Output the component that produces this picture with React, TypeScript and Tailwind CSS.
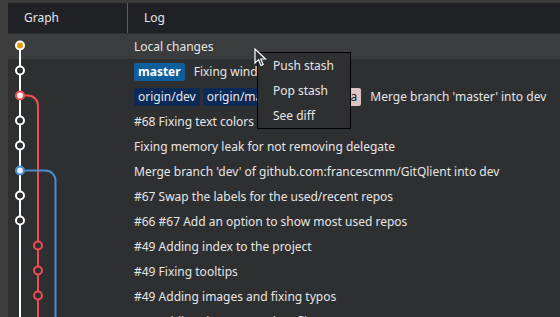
import React from "react";

const font = { fontFamily: '"Noto Sans", "Open Sans", sans-serif' };

type Badge = { text: string; cls: string };
type Row = { text: string; badges?: Badge[]; hl?: boolean };

const rows: Row[] = [
  { text: "Local changes", hl: true },
  {
    text: "Fixing windows titles",
    badges: [{ text: "master", cls: "bg-[#0e5e9e] text-white font-bold" }],
  },
  {
    text: "Merge branch 'master' into dev",
    badges: [
      { text: "origin/dev", cls: "bg-[#0b2a58] text-[#e8e8e8]" },
      { text: "origin/master", cls: "bg-[#0b2a58] text-[#e8e8e8]" },
      { text: "v1.0.0-beta", cls: "bg-[#dcc4c4] text-[#1b1b1b]" },
    ],
  },
  { text: "#68 Fixing text colors" },
  { text: "Fixing memory leak for not removing delegate" },
  { text: "Merge branch 'dev' of github.com:francescmm/GitQlient into dev" },
  { text: "#67 Swap the labels for the used/recent repos" },
  { text: "#66 #67 Add an option to show most used repos" },
  { text: "#49 Adding index to the project" },
  { text: "#49 Fixing tooltips" },
  { text: "#49 Adding images and fixing typos" },
  { text: "#49 Adding the new readme file" },
];

function Graph() {
  const white = "#ffffff";
  const red = "#f04e50";
  const blue = "#4a8ccc";
  const bg = "#2e2f31";
  const y = (i: number) => 12.5 + i * 25;
  return (
    <svg
      className="absolute left-0 top-0"
      width="120"
      height="300"
      viewBox="0 0 120 300"
    >
      <line x1="12" y1={y(0)} x2="12" y2="300" stroke={white} strokeWidth="2" />
      <path
        d={`M12 ${y(2)} H20 A10 10 0 0 1 30 ${y(2) + 10} V300`}
        fill="none"
        stroke={red}
        strokeWidth="2"
      />
      <path
        d={`M12 ${y(5)} H37.5 A10 10 0 0 1 47.5 ${y(5) + 10} V300`}
        fill="none"
        stroke={blue}
        strokeWidth="2"
      />
      <circle cx="12" cy={y(0)} r="4" fill="#e39a00" stroke={white} strokeWidth="2" />
      {[1, 3, 4, 6, 7].map((i) => (
        <circle key={i} cx="12" cy={y(i)} r="4" fill={bg} stroke={white} strokeWidth="2" />
      ))}
      <circle cx="12" cy={y(2)} r="4" fill="#ffffff" stroke={red} strokeWidth="2.2" />
      <circle cx="12" cy={y(5)} r="4" fill="#e6f0ff" stroke={blue} strokeWidth="2.2" />
      {[8, 9, 10].map((i) => (
        <circle key={i} cx="30" cy={y(i)} r="4" fill={bg} stroke={red} strokeWidth="2" />
      ))}
    </svg>
  );
}

export default function App() {
  return (
    <div
      className="relative w-[560px] h-[317px] overflow-hidden bg-[#3c3c3c] flex text-[12px] text-[#e6e6e6]"
      style={font}
    >
      <div className="w-[8px] shrink-0" />
      <div className="flex-1 flex flex-col pt-[3px] min-w-0">
        <div className="h-[30px] shrink-0 bg-[#202124] flex items-center">
          <div className="w-[120px] h-full flex items-center pl-[16px] border-r border-[#5c5c5c]">
            Graph
          </div>
          <div className="pl-[16px]">Log</div>
        </div>
        <div className="relative flex-1 bg-[#2e2f31] pt-[1px]">
          {rows.map((r, i) => (
            <div
              key={i}
              className={`h-[25px] flex items-center ${r.hl ? "bg-[#3b3c3e]" : ""}`}
            >
              <div className="w-[120px] shrink-0" />
              <div className="pl-[6px] flex items-center whitespace-nowrap">
                {r.badges && (
                  <div className="flex items-center gap-[3px] mr-[9px]">
                    {r.badges.map((b) => (
                      <span
                        key={b.text}
                        className={`h-[18px] px-[4px] rounded-[2px] flex items-center ${b.cls}`}
                      >
                        {b.text}
                      </span>
                    ))}
                  </div>
                )}
                <span>{r.text}</span>
              </div>
            </div>
          ))}
          <div className="absolute left-0 top-0 pt-[1px]">
            <Graph />
          </div>
        </div>
      </div>

      <div className="absolute left-[257px] top-[52px] w-[94px] border border-black bg-[#2e2f31]">
        {["Push stash", "Pop stash", "See diff"].map((t) => (
          <div key={t} className="h-[25px] flex items-center pl-[15px]">
            {t}
          </div>
        ))}
      </div>

      <svg
        className="absolute left-[254px] top-[48px]"
        width="14"
        height="20"
        viewBox="0 0 14 20"
      >
        <path
          d="M1 1 L1 15 L4.5 11.8 L7 17.5 L9.2 16.5 L6.8 11 L11.5 11 Z"
          fill="#2e2f31"
          stroke="#ffffff"
          strokeWidth="1.2"
          strokeLinejoin="miter"
        />
      </svg>
    </div>
  );
}
